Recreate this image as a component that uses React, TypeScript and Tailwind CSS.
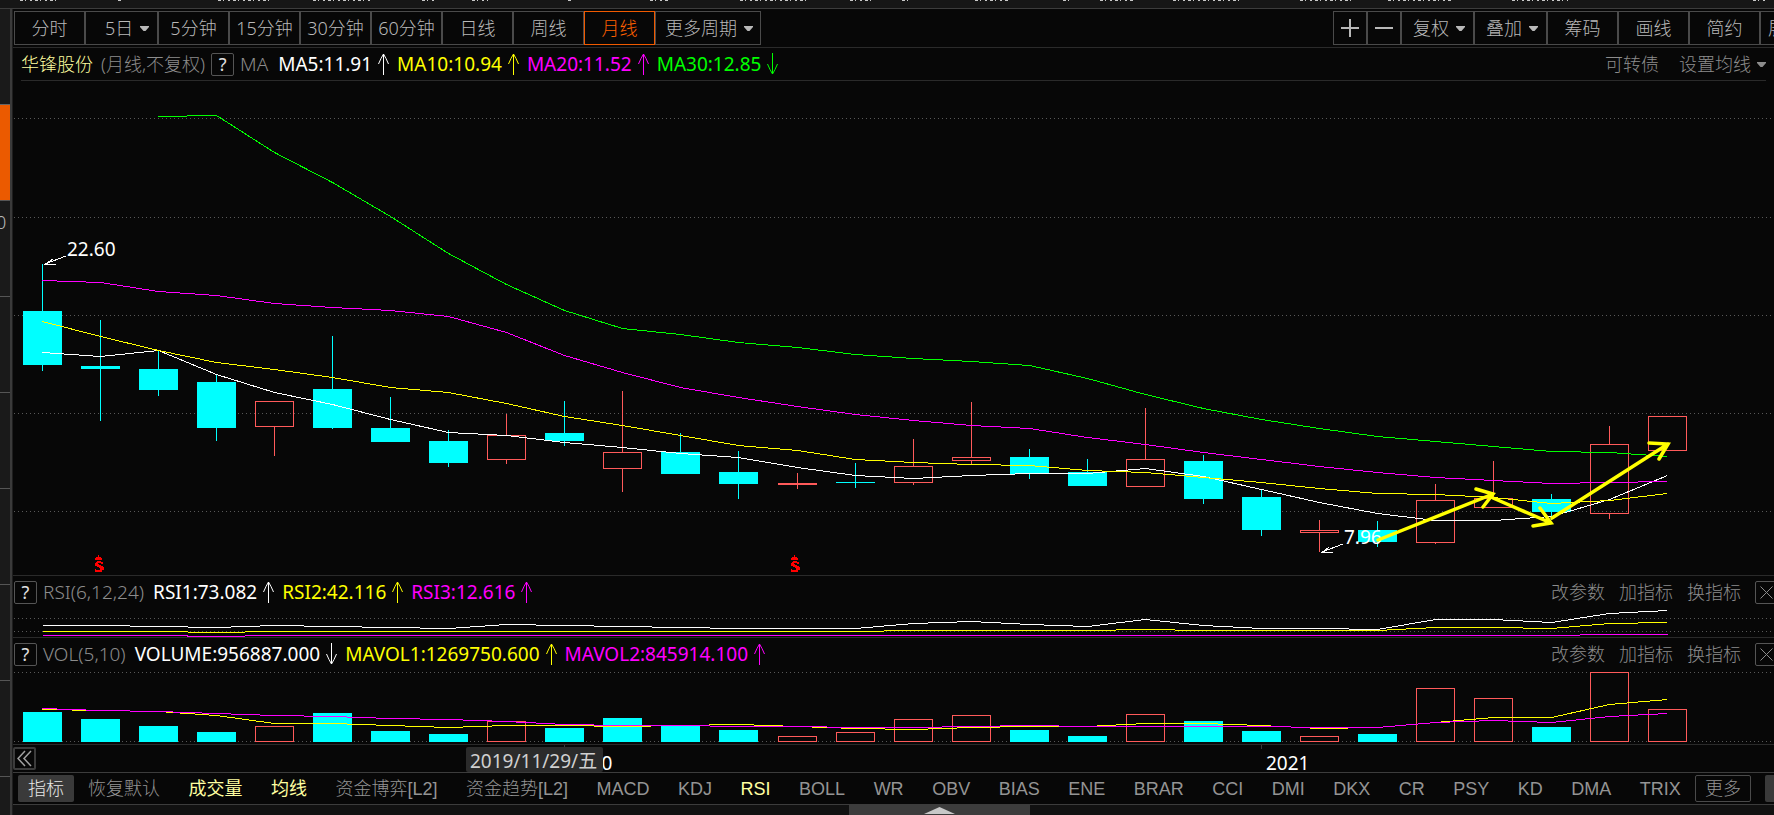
import React, { useState } from 'react';

interface Candle {
  high: number;
  top: number;
  bottom: number;
  low: number;
  volume: number;
  up?: boolean;
}

interface Reading {
  label: string;
  color: string;
  trend: 'up' | 'down';
}

interface PeriodButton {
  label: string;
  className: string;
  menu?: boolean;
}

const CYAN = '#00ffff';
const RED = '#ff5a5a';
const YELLOW = '#ffff00';
const MAGENTA = '#ff00ff';
const GREEN = '#00ff00';
const WHITE = '#ffffff';

const CHART_WIDTH = 1761;
const VOLUME_BASE = 72;

const candles: Candle[] = [
  { high: 183, top: 230, bottom: 284, low: 290, volume: 42 },
  { high: 239, top: 285, bottom: 288, low: 340, volume: 49 },
  { high: 269, top: 288, bottom: 309, low: 315, volume: 56 },
  { high: 294, top: 301, bottom: 347, low: 360, volume: 62 },
  { high: 320, top: 320, bottom: 346, low: 375, volume: 56, up: true },
  { high: 255, top: 308, bottom: 347, low: 348, volume: 43 },
  { high: 316, top: 347, bottom: 361, low: 361, volume: 61 },
  { high: 349, top: 360, bottom: 382, low: 386, volume: 64 },
  { high: 333, top: 354, bottom: 379, low: 383, volume: 51, up: true },
  { high: 320, top: 352, bottom: 360, low: 365, volume: 58 },
  { high: 310, top: 371, bottom: 388, low: 411, volume: 48, up: true },
  { high: 352, top: 371, bottom: 393, low: 393, volume: 55 },
  { high: 370, top: 391, bottom: 403, low: 418, volume: 60 },
  { high: 392, top: 402, bottom: 404, low: 408, volume: 66, up: true },
  { high: 382, top: 401, bottom: 402, low: 407, volume: 62 },
  { high: 358, top: 385, bottom: 402, low: 404, volume: 49, up: true },
  { high: 321, top: 376, bottom: 380, low: 383, volume: 45, up: true },
  { high: 368, top: 376, bottom: 393, low: 398, volume: 60 },
  { high: 378, top: 391, bottom: 405, low: 405, volume: 66 },
  { high: 327, top: 378, bottom: 406, low: 406, volume: 44, up: true },
  { high: 374, top: 380, bottom: 418, low: 423, volume: 51 },
  { high: 409, top: 416, bottom: 449, low: 455, volume: 61 },
  { high: 439, top: 449, bottom: 452, low: 471, volume: 66, up: true },
  { high: 440, top: 449, bottom: 461, low: 466, volume: 64 },
  { high: 403, top: 419, bottom: 462, low: 463, volume: 18, up: true },
  { high: 380, top: 417, bottom: 427, low: 427, volume: 28, up: true },
  { high: 413, top: 418, bottom: 431, low: 439, volume: 57 },
  { high: 345, top: 363, bottom: 433, low: 438, volume: 2, up: true },
  { high: 335, top: 335, bottom: 370, low: 370, volume: 39, up: true },
];

// months whose volume bar is drawn hollow
const hollowVolume = [4, 8, 13, 14, 15, 16, 19, 22, 24, 25, 27, 28];

const ma5 = [271, 275, 269, 293, 311, 323, 338, 351, 354, 361, 366, 372, 376, 386, 394, 397, 394, 392, 392, 387, 395, 408, 421, 432, 439, 439, 435, 418, 394];
const ma10 = [240, 255, 269, 281, 288, 296, 306, 311, 322, 335, 344, 354, 364, 369, 378, 381, 383, 384, 389, 391, 396, 401, 407, 412, 413, 416, 422, 419, 412];
const ma20 = [199, 201, 210, 214, 222, 226, 229, 235, 251, 274, 291, 306, 316, 325, 333, 339, 344, 347, 356, 363, 371, 378, 385, 391, 396, 399, 402, 401, 400];
const ma30 = [35, 34, 71, 101, 135, 172, 203, 229, 247, 253, 261, 266, 273, 277, 280, 284, 297, 313, 327, 338, 347, 355, 360, 365, 370, 371, 375];

const rsi1 = [17, 17, 18, 19, 17, 18, 19, 20, 16, 17, 18, 19, 20, 20, 20, 15, 13, 16, 18, 11, 17, 20, 20, 21, 11, 11, 14, 5, 2];
const rsi2 = [23, 23, 23, 24, 23, 23, 23, 23, 23, 23, 23, 23, 23, 23, 23, 22, 22, 22, 22, 21, 22, 22, 22, 22, 19, 19, 20, 15, 14];
const rsi3 = [27, 27, 27, 28, 27, 27, 27, 27, 27, 27, 27, 27, 27, 27, 27, 27, 27, 27, 27, 27, 27, 27, 27, 27, 27, 27, 27, 26, 26];

const mavol1 = [39, 40, 41, 45, 53, 53, 55, 57, 55, 55, 56, 55, 54, 56, 58, 59, 57, 56, 56, 53, 53, 55, 58, 57, 52, 47, 47, 34, 29];
const mavol2 = [38, 40, 41, 43, 45, 46, 48, 49, 51, 54, 55, 55, 56, 56, 57, 57, 56, 55, 56, 56, 56, 56, 57, 57, 52, 50, 52, 46, 43];

const periods: PeriodButton[] = [
  { label: '分时', className: 'w-[71px] justify-center' },
  { label: '5日', className: 'w-[73px] pl-[19px]', menu: true },
  { label: '5分钟', className: 'w-[71px] justify-center' },
  { label: '15分钟', className: 'w-[71px] justify-center' },
  { label: '30分钟', className: 'w-[71px] justify-center' },
  { label: '60分钟', className: 'w-[71px] justify-center' },
  { label: '日线', className: 'w-[71px] justify-center' },
  { label: '周线', className: 'w-[71px] justify-center' },
  { label: '月线', className: 'w-[71px] justify-center' },
  { label: '更多周期', className: 'w-[106px] pl-[9px]', menu: true },
];

const tools: PeriodButton[] = [
  { label: '复权', className: 'w-[73px] pl-[11px]', menu: true },
  { label: '叠加', className: 'w-[73px] pl-[11px]', menu: true },
  { label: '筹码', className: 'w-[71px] justify-center' },
  { label: '画线', className: 'w-[71px] justify-center' },
  { label: '简约', className: 'w-[71px] justify-center' },
  { label: '展开', className: 'w-[71px] pl-[7px]' },
];

const maReadings: Reading[] = [
  { label: 'MA5:11.91', color: 'text-white', trend: 'up' },
  { label: 'MA10:10.94', color: 'text-[#ffff00]', trend: 'up' },
  { label: 'MA20:11.52', color: 'text-[#ff00ff]', trend: 'up' },
  { label: 'MA30:12.85', color: 'text-[#00ff00]', trend: 'down' },
];

const rsiReadings: Reading[] = [
  { label: 'RSI1:73.082', color: 'text-white', trend: 'up' },
  { label: 'RSI2:42.116', color: 'text-[#ffff00]', trend: 'up' },
  { label: 'RSI3:12.616', color: 'text-[#ff00ff]', trend: 'up' },
];

const volReadings: Reading[] = [
  { label: 'VOLUME:956887.000', color: 'text-white', trend: 'down' },
  { label: 'MAVOL1:1269750.600', color: 'text-[#ffff00]', trend: 'up' },
  { label: 'MAVOL2:845914.100', color: 'text-[#ff00ff]', trend: 'up' },
];

const indicators = [
  '恢复默认', '成交量', '均线', '资金博弈[L2]', '资金趋势[L2]', 'MACD', 'KDJ', 'RSI', 'BOLL', 'WR', 'OBV',
  'BIAS', 'ENE', 'BRAR', 'CCI', 'DMI', 'DKX', 'CR', 'PSY', 'KD', 'DMA', 'TRIX',
];

// lower edge of the menu bar labels, [start, end]
const menuEdges = [
  [20, 56], [118, 123], [218, 272], [313, 372], [422, 436], [472, 488], [568, 573], [650, 670], [740, 806],
  [850, 872], [902, 908], [975, 1008], [1063, 1072], [1100, 1135], [1173, 1240], [1300, 1353], [1388, 1452],
  [1512, 1568], [1753, 1765],
];

const centerX = (index: number) => Math.round(29 + 58.04 * index);

const toPoints = (values: number[], offset = 0) =>
  values.map((y, i) => `${centerX(i + offset) + 0.5},${y + 0.5}`).join(' ');

const Caret: React.FC<{ className?: string }> = ({ className = '' }) => (
  <svg className={`w-[9px] h-[5px] shrink-0 ${className}`} viewBox="0 0 9 5" fill="currentColor" aria-hidden="true">
    <path d="M0 0h9v1L5.5 5h-2L0 1z" />
  </svg>
);

const TrendArrow: React.FC<{ trend: 'up' | 'down' }> = ({ trend }) => (
  <svg
    className={`w-[11px] h-[22px] ml-[6px] mr-2 shrink-0 ${trend === 'down' ? 'rotate-180' : ''}`}
    viewBox="0 0 11 22"
    fill="none"
    stroke="currentColor"
    aria-hidden="true"
  >
    <path d="M5.5 1v21M5.5 1L3 5.500L0.500 11M5.500 1L8 5.500L10.500 11" />
  </svg>
);

const HelpButton: React.FC<{ className?: string }> = ({ className = '' }) => (
  <button
    aria-label="帮助"
    className={`w-[23px] h-[23px] shrink-0 flex items-center justify-center border border-[#555] rounded-[2px] text-[18px] leading-none font-normal text-[#e0e0e0] ${className}`}
  >
    ?
  </button>
);

const Readings: React.FC<{ items: Reading[] }> = ({ items }) => (
  <>
    {items.map(item => (
      <span key={item.label} className={`flex items-center shrink-0 text-[19px] font-normal ${item.color}`}>
        {item.label}
        <TrendArrow trend={item.trend} />
      </span>
    ))}
  </>
);

const GridLine: React.FC<{ y: number }> = ({ y }) => (
  <line x1="1" x2={CHART_WIDTH} y1={y + 0.5} y2={y + 0.5} stroke="#585858" strokeDasharray="1 3" />
);

const Series: React.FC<{ values: number[]; color: string; offset?: number }> = ({ values, color, offset }) => (
  <polyline points={toPoints(values, offset)} fill="none" stroke={color} />
);

const DividendMark: React.FC<{ x: number }> = ({ x }) => (
  <path
    transform={`translate(${x} 474)`}
    fill="#ff0000"
    d="M3 0h1v2h2v1h1v2H0V3h1V2h2zM2 6h4v1h2v2H6V8H3v1h1v1h2v1h2v1h1v3H7v2H0v-3h1v1h4v-2H4v-1H2v-1H0V8h1V7h1z"
  />
);

const PriceChart: React.FC = () => (
  <svg className="block w-full h-auto font-normal" viewBox={`0 0 ${CHART_WIDTH} 494`} role="img" aria-label="月线K线图">
    <g shapeRendering="crispEdges">
      {[37, 136, 234, 332, 430].map(y => <GridLine key={y} y={y} />)}
      {candles.map((candle, i) => {
        const x = centerX(i);
        const color = candle.up ? RED : CYAN;
        return (
          <g key={i}>
            <rect x={x} y={candle.high} width="1" height={candle.top - candle.high} fill={color} />
            <rect x={x} y={candle.bottom} width="1" height={candle.low - candle.bottom} fill={color} />
            {candle.up ? (
              <rect x={x - 18.5} y={candle.top + 0.5} width="38" height={candle.bottom - candle.top - 1} fill="none" stroke={RED} />
            ) : (
              <rect x={x - 19} y={candle.top} width="39" height={candle.bottom - candle.top} fill={CYAN} />
            )}
          </g>
        );
      })}
      <Series values={ma5} color={WHITE} />
      <Series values={ma10} color={YELLOW} />
      <Series values={ma20} color={MAGENTA} />
      <Series values={ma30} color={GREEN} offset={2} />
      <DividendMark x={82} />
      <DividendMark x={778} />
      <path d="M53 175L32 183M40 178L32 183.500H43M1330 463L1309 471M1316 466L1309 471.500H1320" fill="none" stroke={WHITE} />
    </g>
    <text x="54" y="175" fill={WHITE} fontSize="19">22.60</text>
    <text x="1331" y="463" fill={WHITE} fontSize="19">7.96</text>
    {/* hand-drawn trend strokes */}
    <g fill="none" stroke={YELLOW} strokeWidth="3.5" strokeLinecap="round">
      <path d="M1365 459L1480 413M1463 408L1480 413L1470 426" />
      <path d="M1480 417L1538 442M1527 427L1538 442L1520 445" />
      <path d="M1539 437L1655 363M1636 362L1655 363L1646 378" />
    </g>
  </svg>
);

const RsiChart: React.FC = () => (
  <svg
    className="block w-full h-auto"
    viewBox={`0 0 ${CHART_WIDTH} 29`}
    shapeRendering="crispEdges"
    role="img"
    aria-label="RSI"
  >
    <GridLine y={10} />
    <GridLine y={23} />
    <Series values={rsi1} color={WHITE} />
    <Series values={rsi2} color={YELLOW} />
    <Series values={rsi3} color={MAGENTA} />
  </svg>
);

const VolumeChart: React.FC = () => (
  <svg
    className="block w-full h-auto"
    viewBox={`0 0 ${CHART_WIDTH} 74`}
    shapeRendering="crispEdges"
    role="img"
    aria-label="成交量"
  >
    <GridLine y={2} />
    <GridLine y={71} />
    {candles.map((candle, i) => {
      const x = centerX(i);
      const height = VOLUME_BASE - candle.volume;
      return hollowVolume.includes(i) ? (
        <rect key={i} x={x - 18.5} y={candle.volume + 0.5} width="38" height={height - 1} fill="none" stroke={RED} />
      ) : (
        <rect key={i} x={x - 19} y={candle.volume} width="39" height={height} fill={CYAN} />
      );
    })}
    <Series values={mavol1} color={YELLOW} />
    <Series values={mavol2} color={MAGENTA} />
  </svg>
);

const IndicatorHeader: React.FC<{ name: string; readings: Reading[] }> = ({ name, readings }) => (
  <div className="flex items-center h-8 pl-px overflow-hidden">
    <HelpButton />
    <span className="ml-[6px] mr-[9px] text-[19px] text-[#8c8c8c] shrink-0">{name}</span>
    <Readings items={readings} />
    <div className="ml-auto -mr-1 flex items-center gap-[14px] shrink-0 text-[18px] text-[#8c8c8c]">
      <button>改参数</button>
      <button>加指标</button>
      <button>换指标</button>
      <button aria-label="关闭" className="w-[23px] h-[23px] flex items-center justify-center border border-[#555] rounded-[2px]">
        <svg className="w-[13px] h-[13px]" viewBox="0 0 13 13" fill="none" stroke="currentColor" aria-hidden="true">
          <path d="M0.500 0.500l12 12M12.500 0.500l-12 12" />
        </svg>
      </button>
    </div>
  </div>
);

export default function App() {
  const [period, setPeriod] = useState('月线');
  const [active, setActive] = useState(['成交量', '均线', 'RSI']);

  const toggleIndicator = (name: string) => {
    setActive(current => (current.includes(name) ? current.filter(item => item !== name) : [...current, name]));
  };

  return (
    <div className="min-h-screen flex flex-col bg-[#070707] text-[#b8b8b8] font-light leading-none whitespace-nowrap overflow-hidden [font-family:'Noto_Sans','Noto_Sans_CJK_SC',sans-serif]">
      <header className="h-[9px] shrink-0 bg-[#161616] border-b border-[#3c3c3c]">
        <svg className="block w-full h-[2px]" viewBox="0 0 1774 2" preserveAspectRatio="xMinYMin slice" aria-hidden="true">
          {menuEdges.map(([start, end]) => (
            <line key={start} x1={start} x2={end} y1="0.5" y2="0.5" stroke="#c8c8c8" strokeDasharray="3 2 1 4 2 3" />
          ))}
        </svg>
      </header>

      <div className="flex flex-1">
        {/* Side navigation */}
        <aside className="w-[10px] shrink-0 bg-[#1a1a1a] pt-[95px] overflow-hidden">
          <div className="h-24 border-t border-[#666] bg-[#eb5a00]" />
          <div className="h-24 border-t border-[#555] pt-3 text-[18px] -ml-1">0</div>
          <div className="h-24 border-t border-[#555]" />
          <div className="h-24 border-t border-[#555]" />
          <div className="h-24 border-t border-[#555]" />
          <div className="h-24 border-t border-[#555]" />
          <div className="h-24 border-t border-[#555]" />
          <div className="border-t border-[#555]" />
        </aside>

        <main className="flex-1 min-w-0 flex flex-col border-l-2 border-[#3a3a3a]">
          <div className="flex-1 border-l border-[#1e1e1e] min-w-0">
            {/* Period toolbar */}
            <div className="flex h-[39px] pl-px py-[2px] border-b border-[#2a2a2a] overflow-hidden text-[18px]">
              {periods.map(item => (
                <button
                  key={item.label}
                  onClick={() => setPeriod(item.label)}
                  className={`h-[34px] shrink-0 flex items-center border ${item.className} ${
                    item.label === period ? 'border-[#f05a00] text-[#ff6000]' : 'border-[#4a4a4a]'
                  }`}
                >
                  {item.label}
                  {item.menu && <Caret className="ml-[7px]" />}
                </button>
              ))}
              <div className="flex shrink-0 ml-auto -mr-[57px]">
                <button aria-label="放大" className="w-[34px] h-[34px] flex items-center justify-center border border-[#4a4a4a]">
                  <svg className="w-[18px] h-[18px]" viewBox="0 0 18 18" stroke="currentColor" strokeWidth="2" aria-hidden="true">
                    <path d="M0 9h18M9 0v18" />
                  </svg>
                </button>
                <button aria-label="缩小" className="w-[34px] h-[34px] flex items-center justify-center border border-[#4a4a4a]">
                  <svg className="w-[18px] h-[18px]" viewBox="0 0 18 18" stroke="currentColor" strokeWidth="2" aria-hidden="true">
                    <path d="M0 9h18" />
                  </svg>
                </button>
                {tools.map(item => (
                  <button key={item.label} className={`h-[34px] flex items-center border border-[#4a4a4a] ${item.className}`}>
                    {item.label}
                    {item.menu && <Caret className="ml-[7px]" />}
                  </button>
                ))}
              </div>
            </div>

            {/* Price header */}
            <div className="flex items-center h-[33px] ml-2 mr-2 border-b border-[#2a2a2a] text-[18px]">
              <span className="text-[#ffffa0]">华锋股份</span>
              <span className="ml-2 text-[#8c8c8c]">(月线,不复权)</span>
              <HelpButton className="ml-[6px]" />
              <span className="ml-[6px] mr-[10px] text-[19px] text-[#8c8c8c]">MA</span>
              <Readings items={maReadings} />
              <div className="ml-auto flex items-center text-[#8c8c8c]">
                <button>可转债</button>
                <button className="ml-5 flex items-center">
                  设置均线
                  <Caret className="ml-[6px]" />
                </button>
              </div>
            </div>
            <PriceChart />

            <section className="border-t border-[#2a2a2a]">
              <IndicatorHeader name="RSI(6,12,24)" readings={rsiReadings} />
              <RsiChart />
            </section>

            <section className="border-t border-[#2a2a2a]">
              <IndicatorHeader name="VOL(5,10)" readings={volReadings} />
              <VolumeChart />
            </section>

            {/* Time axis */}
            <div className="relative border-t border-[#2a2a2a]">
              <svg className="block w-full h-auto font-normal" viewBox={`0 0 ${CHART_WIDTH} 27`} fontSize="19" role="img" aria-label="时间轴">
                <path d="M551.500 0v4M1248.500 0v4" stroke="#3a3a3a" />
                <text x="556" y="25" fill={WHITE}>2020</text>
                <text x="1253" y="25" fill={WHITE}>2021</text>
                <rect x="453" y="2" width="137" height="25" rx="2" fill="#2b2b2b" />
                <text x="457" y="23" fill="#d0d0d0">2019/11/29/五</text>
              </svg>
              <button
                aria-label="向前"
                className="absolute left-0 top-[2px] w-[23px] h-[23px] flex items-center justify-center border-2 border-[#3c3c3c] rounded-[2px]"
              >
                <svg className="w-[15px] h-[17px]" viewBox="0 0 15 17" fill="none" stroke="#a0a0a0" strokeWidth="1.500" aria-hidden="true">
                  <path d="M8 1L1 8.500L8 16M14 1L7 8.500L14 16" />
                </svg>
              </button>
            </div>

            {/* Indicator tabs */}
            <nav className="flex items-center h-[33px] pl-[5px] border-y border-[#3c3c3c] text-[18px] text-[#949494] overflow-hidden [font-family:'Liberation_Sans','Noto_Sans_CJK_SC',sans-serif]">
              <button className="w-14 h-[27px] shrink-0 rounded-[2px] bg-[#3a3a3a] text-[#e8e8e8]">指标</button>
              <div className="flex flex-1 items-center justify-between">
                {indicators.map(name => (
                  <button
                    key={name}
                    onClick={() => toggleIndicator(name)}
                    className={`px-[14px] shrink-0 ${active.includes(name) ? 'font-normal text-[#ffffa0]' : ''}`}
                  >
                    {name}
                  </button>
                ))}
              </div>
              <button className="w-14 h-[27px] mr-[14px] shrink-0 rounded-[2px] border border-[#4a4a4a]">更多</button>
              <div className="w-[9px] h-[27px] shrink-0 rounded-l-[2px] bg-[#3a3a3a]" />
            </nav>

            <footer className="flex justify-center h-[10px] pl-[92px] bg-[#111]">
              <button aria-label="展开面板" className="w-[181px] flex justify-center pt-[2px] bg-[#3c3c3c]">
                <svg className="w-[31px] h-[7px]" viewBox="0 0 31 7" fill="#c8c8c8" aria-hidden="true">
                  <path d="M15.500 0L31 7H0z" />
                </svg>
              </button>
            </footer>
          </div>
        </main>
      </div>
    </div>
  );
}
